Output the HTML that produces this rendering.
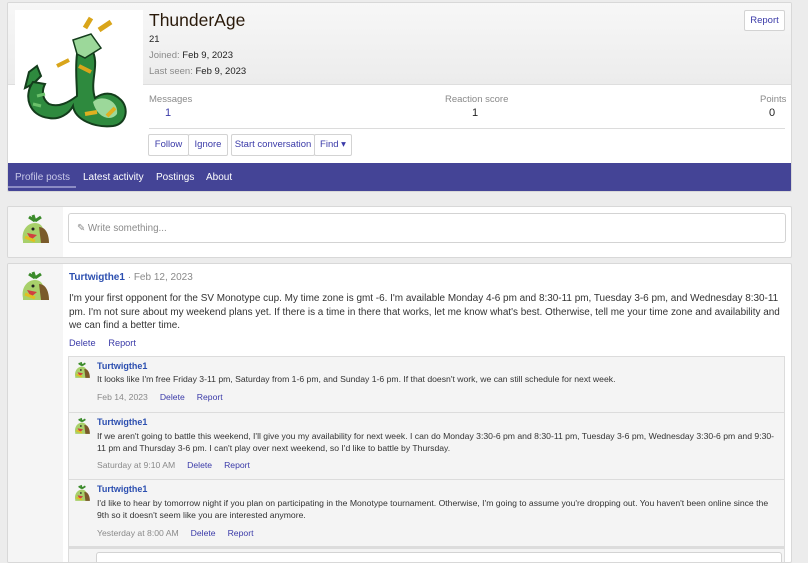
<!DOCTYPE html>
<html><head><meta charset="utf-8"><style>
*{margin:0;padding:0;box-sizing:border-box}
body{width:808px;height:558px;overflow:hidden;background:#ececec;font-family:"Liberation Sans",sans-serif;color:#222;position:relative}
.a{position:absolute;white-space:nowrap}
.card{position:absolute;background:#fff;border:1px solid #d8d8d8;border-radius:2px}
.lnk{color:#3a3aa8}
.mut{color:#8a8a8a}
.btn{position:absolute;top:134px;height:22px;border:1px solid #d3d3d3;background:#fff;font-size:9.5px;color:#3a3aa8;line-height:20px;text-align:center;border-radius:2px}
.nav{font-size:10px;color:#fff;top:169px}
.t{font-size:9.95px;color:#333}
.c{font-size:8.65px;color:#333}
.n{font-weight:bold;color:#2c4fb0}
</style></head><body>

<div class="card" style="left:7px;top:2px;width:785px;height:190px;overflow:hidden">
  <div style="position:absolute;left:0;top:0;width:785px;height:82px;background:linear-gradient(#f7f7f7,#ececec);border-bottom:1px solid #dedede"></div>
  <div style="position:absolute;left:7px;top:7px;width:128px;height:128px;background:#fff">
    <svg width="128" height="128" viewBox="0 0 128 128">
      <path d="M14 62 L22 56 L26 66 L18 74 L10 78 Z" fill="#2e8a3e" stroke="#143d1c" stroke-width="2"/>
      <path d="M18 72 C8 86 14 106 34 108 C44 110 54 104 58 96 C60 110 80 118 98 116 C112 114 114 98 106 90 C96 80 86 84 80 88 C74 70 86 54 76 38 L62 44 C60 60 62 74 62 86 C54 92 44 98 34 94 C28 90 26 82 30 74 Z" fill="#2e8a3e" stroke="#143d1c" stroke-width="2"/>
      <path d="M78 92 C86 84 104 90 102 104 C96 112 82 108 78 92 Z" fill="#9cd89a"/>
      <path d="M58 30 L76 24 L86 38 L70 48 L62 44 Z" fill="#9cd89a" stroke="#143d1c" stroke-width="1.5"/>
      <path d="M70 18 L76 8 M84 20 L96 12" stroke="#d9a51a" stroke-width="5"/>
      <path d="M64 56 L76 62 M42 56 L54 50" stroke="#d9a51a" stroke-width="4"/>
      <path d="M70 104 L82 102 M92 106 L100 98" stroke="#e0b020" stroke-width="4"/>
      <path d="M22 86 L30 84 M18 94 L26 96" stroke="#6ac06a" stroke-width="3"/>
    </svg>
  </div>
  <div class="a" style="left:141px;top:7px;font-size:17.5px;color:#2a1a0a">ThunderAge</div>
  <div class="a" style="left:141px;top:31px;font-size:9.5px">21</div>
  <div class="a" style="left:141px;top:47px;font-size:9.5px"><span class="mut">Joined:</span> Feb 9, 2023</div>
  <div class="a" style="left:141px;top:63px;font-size:9.5px"><span class="mut">Last seen:</span> Feb 9, 2023</div>
  <div class="a" style="left:736px;top:7px;width:41px;height:21px;border:1px solid #d3d3d3;background:#fff;border-radius:2px;font-size:9.5px;color:#3a3aa8;text-align:center;line-height:19px">Report</div>
  <div class="a mut" style="left:141px;top:91px;font-size:9.5px">Messages</div>
  <div class="a lnk" style="left:157px;top:104px;font-size:11px">1</div>
  <div class="a mut" style="left:437px;top:91px;font-size:9.5px">Reaction score</div>
  <div class="a" style="left:464px;top:104px;font-size:11px">1</div>
  <div class="a mut" style="left:752px;top:91px;font-size:9.5px">Points</div>
  <div class="a" style="left:761px;top:104px;font-size:11px">0</div>
  <div style="position:absolute;left:141px;top:125px;width:636px;height:1px;background:#dcdcdc"></div>
  <div style="position:absolute;left:0;top:160px;width:785px;height:30px;background:#444496"></div>
  <div class="a nav" style="left:7px;color:#c8c8e8">Profile posts</div>
  <div style="position:absolute;left:0;top:183px;width:68px;height:2px;background:#8c8cc4"></div>
  <div class="a nav" style="left:75px">Latest activity</div>
  <div class="a nav" style="left:148px">Postings</div>
  <div class="a nav" style="left:198px">About</div>
</div>
<div class="btn" style="left:148px;width:41px">Follow</div>
<div class="btn" style="left:188px;width:40px">Ignore</div>
<div class="btn" style="left:231px;width:84px">Start conversation</div>
<div class="btn" style="left:314px;width:38px">Find ▾</div>

<svg width="0" height="0" style="position:absolute"><defs>
<symbol id="tw" viewBox="0 0 32 32"><path d="M14 2 L16 8 M16 8 L10 4 M16 8 L22 4" stroke="#3a8a2a" stroke-width="3"/><path d="M4 28 C2 18 8 10 16 10 C24 10 26 18 24 24 L30 30 L4 30 Z" fill="#a8d06a"/><path d="M20 14 C28 14 30 24 30 30 L22 30 Z" fill="#7a5a2a"/><path d="M8 20 L18 22 L12 27 Z" fill="#d04040"/><path d="M6 24 L16 28" stroke="#e0c020" stroke-width="3"/><circle cx="14" cy="16" r="1.5" fill="#222"/></symbol>
</defs></svg>

<div class="card" style="left:7px;top:206px;width:785px;height:52px;overflow:hidden">
  <div style="position:absolute;left:0;top:0;width:55px;height:52px;background:#f5f5f5"></div>
  <svg class="a" style="left:11px;top:6px" width="32" height="32"><use href="#tw"/></svg>
  <div style="position:absolute;left:60px;top:6px;width:718px;height:30px;border:1px solid #d3d3d3;border-radius:3px;background:#fff"></div>
  <div class="a mut" style="left:69px;top:16px;font-size:9.8px">✎ Write something...</div>
</div>

<div class="card" style="left:7px;top:263px;width:785px;height:300px;overflow:hidden">
  <div style="position:absolute;left:0;top:0;width:55px;height:300px;background:#f5f5f5"></div>
  <svg class="a" style="left:11px;top:6px" width="32" height="32"><use href="#tw"/></svg>
  <div class="a" style="left:61px;top:8px;font-size:10px"><span class="n">Turtwigthe1</span> <span class="mut">· Feb 12, 2023</span></div>
  <div class="a t" style="left:61px;top:28px;line-height:13.5px">I'm your first opponent for the SV Monotype cup. My time zone is gmt -6. I'm available Monday 4-6 pm and 8:30-11 pm, Tuesday 3-6 pm, and Wednesday 8:30-11<br>pm. I'm not sure about my weekend plans yet. If there is a time in there that works, let me know what's best. Otherwise, tell me your time zone and availability and<br>we can find a better time.</div>
  <div class="a lnk" style="left:61px;top:74px;font-size:9.2px">Delete &nbsp;&nbsp;&nbsp; Report</div>

  <div style="position:absolute;left:60px;top:92px;width:717px;height:210px;background:#f4f4f4;border:1px solid #dcdcdc"></div>
  <div style="position:absolute;left:61px;top:148px;width:716px;height:1px;background:#dcdcdc"></div>
  <div style="position:absolute;left:61px;top:215px;width:716px;height:1px;background:#dcdcdc"></div>
  <div style="position:absolute;left:61px;top:282px;width:716px;height:3px;background:#dcdcdc"></div>
  <div style="position:absolute;left:88px;top:288px;width:686px;height:20px;background:#fff;border:1px solid #d3d3d3;border-radius:3px"></div>

  <svg class="a" style="left:65px;top:97px" width="18" height="18"><use href="#tw"/></svg>
  <div class="a c n" style="left:89px;top:97px;font-size:9px">Turtwigthe1</div>
  <div class="a c" style="left:89px;top:110px">It looks like I'm free Friday 3-11 pm, Saturday from 1-6 pm, and Sunday 1-6 pm. If that doesn't work, we can still schedule for next week.</div>
  <div class="a c" style="left:89px;top:128px"><span class="mut">Feb 14, 2023</span> &nbsp;&nbsp;&nbsp; <span class="lnk">Delete</span> &nbsp;&nbsp;&nbsp; <span class="lnk">Report</span></div>

  <svg class="a" style="left:65px;top:153px" width="18" height="18"><use href="#tw"/></svg>
  <div class="a c n" style="left:89px;top:153px;font-size:9px">Turtwigthe1</div>
  <div class="a c" style="left:89px;top:166px;line-height:12px">If we aren't going to battle this weekend, I'll give you my availability for next week. I can do Monday 3:30-6 pm and 8:30-11 pm, Tuesday 3-6 pm, Wednesday 3:30-6 pm and 9:30-<br>11 pm and Thursday 3-6 pm. I can't play over next weekend, so I'd like to battle by Thursday.</div>
  <div class="a c" style="left:89px;top:196px"><span class="mut">Saturday at 9:10 AM</span> &nbsp;&nbsp;&nbsp; <span class="lnk">Delete</span> &nbsp;&nbsp;&nbsp; <span class="lnk">Report</span></div>

  <svg class="a" style="left:65px;top:220px" width="18" height="18"><use href="#tw"/></svg>
  <div class="a c n" style="left:89px;top:220px;font-size:9px">Turtwigthe1</div>
  <div class="a c" style="left:89px;top:233px;line-height:12px">I'd like to hear by tomorrow night if you plan on participating in the Monotype tournament. Otherwise, I'm going to assume you're dropping out. You haven't been online since the<br>9th so it doesn't seem like you are interested anymore.</div>
  <div class="a c" style="left:89px;top:264px"><span class="mut">Yesterday at 8:00 AM</span> &nbsp;&nbsp;&nbsp; <span class="lnk">Delete</span> &nbsp;&nbsp;&nbsp; <span class="lnk">Report</span></div>
</div>
</body></html>
